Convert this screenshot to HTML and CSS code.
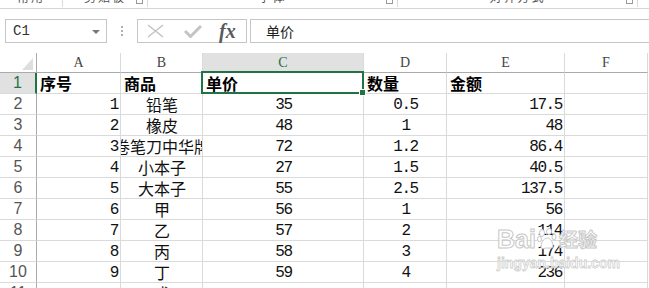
FILE: index.html
```html
<!DOCTYPE html>
<html lang="zh-CN">
<head>
    <meta charset="UTF-8">
    <title>工作表</title>
    <link rel="stylesheet" href="styles.css">
</head>
<body>

<!-- Ribbon, only the bottom edge of the group labels is visible -->
<div class="ribbon">
    <div class="group g1"><span class="group-label">常用</span></div>
    <div class="group g2"><span class="group-label">剪贴板</span><span class="launcher"></span></div>
    <div class="group g3"><span class="group-label">字体</span><span class="launcher"></span></div>
    <div class="group g4"><span class="group-label">对齐方式</span><span class="launcher"></span></div>
</div>

<!-- Name box and formula bar -->
<div class="formula-bar">
    <div class="name-box">
        <span>C1</span>
        <span class="caret"></span>
    </div>
    <div class="grip">
        <svg width="3" height="11" viewBox="0 0 3 11">
            <rect x="0" y="0" width="2" height="2" fill="#b0b0b0"/>
            <rect x="0" y="4" width="2" height="2" fill="#b0b0b0"/>
            <rect x="0" y="8" width="2" height="2" fill="#b0b0b0"/>
        </svg>
    </div>
    <div class="fx-box">
        <svg class="btn-cancel" width="17" height="14" viewBox="0 0 17 14">
            <path d="M1 1 L16 13 M16 1 L1 13" stroke="#c4c4c4" stroke-width="1.6" fill="none"/>
        </svg>
        <svg class="btn-ok" width="18" height="13" viewBox="0 0 18 13">
            <path d="M1 6 L6.5 11.5 L17 1" stroke="#c4c4c4" stroke-width="3" fill="none"/>
        </svg>
        <span class="fx">fx</span>
    </div>
    <div class="formula-input">单价</div>
</div>

<!-- Worksheet grid -->
<div class="sheet">
    <div class="corner">
        <svg width="12" height="13" viewBox="0 0 12 13"><polygon points="11,0 11,12 0,12" fill="#dedede"/></svg>
    </div>
    <div class="col">A</div>
    <div class="col">B</div>
    <div class="col on">C</div>
    <div class="col">D</div>
    <div class="col">E</div>
    <div class="col">F</div>

    <div class="rh on">1</div>
    <div class="cell b">序号</div>
    <div class="cell b">商品</div>
    <div class="cell b sel">单价</div>
    <div class="cell b">数量</div>
    <div class="cell b">金额</div>
    <div class="cell"></div>

    <div class="rh">2</div>
    <div class="cell r">1</div>
    <div class="cell m zh">铅笔</div>
    <div class="cell m">35</div>
    <div class="cell m">0.5</div>
    <div class="cell r">17.5</div>
    <div class="cell"></div>

    <div class="rh">3</div>
    <div class="cell r">2</div>
    <div class="cell m zh">橡皮</div>
    <div class="cell m">48</div>
    <div class="cell m">1</div>
    <div class="cell r">48</div>
    <div class="cell"></div>

    <div class="rh">4</div>
    <div class="cell r">3</div>
    <div class="cell m zh">卷笔刀中华牌</div>
    <div class="cell m">72</div>
    <div class="cell m">1.2</div>
    <div class="cell r">86.4</div>
    <div class="cell"></div>

    <div class="rh">5</div>
    <div class="cell r">4</div>
    <div class="cell m zh">小本子</div>
    <div class="cell m">27</div>
    <div class="cell m">1.5</div>
    <div class="cell r">40.5</div>
    <div class="cell"></div>

    <div class="rh">6</div>
    <div class="cell r">5</div>
    <div class="cell m zh">大本子</div>
    <div class="cell m">55</div>
    <div class="cell m">2.5</div>
    <div class="cell r">137.5</div>
    <div class="cell"></div>

    <div class="rh">7</div>
    <div class="cell r">6</div>
    <div class="cell m zh">甲</div>
    <div class="cell m">56</div>
    <div class="cell m">1</div>
    <div class="cell r">56</div>
    <div class="cell"></div>

    <div class="rh">8</div>
    <div class="cell r">7</div>
    <div class="cell m zh">乙</div>
    <div class="cell m">57</div>
    <div class="cell m">2</div>
    <div class="cell r">114</div>
    <div class="cell"></div>

    <div class="rh">9</div>
    <div class="cell r">8</div>
    <div class="cell m zh">丙</div>
    <div class="cell m">58</div>
    <div class="cell m">3</div>
    <div class="cell r">174</div>
    <div class="cell"></div>

    <div class="rh">10</div>
    <div class="cell r">9</div>
    <div class="cell m zh">丁</div>
    <div class="cell m">59</div>
    <div class="cell m">4</div>
    <div class="cell r">236</div>
    <div class="cell"></div>

    <div class="rh">11</div>
    <div class="cell r"></div>
    <div class="cell m zh">戊</div>
    <div class="cell m"></div>
    <div class="cell m"></div>
    <div class="cell r"></div>
    <div class="cell"></div>
</div>

<!-- Site watermark over the sheet -->
<div class="watermark">
    <div class="wm-top">
        <span class="wm-bai">Bai</span>
        <svg class="wm-paw" width="20" height="22" viewBox="0 0 20 22">
            <ellipse cx="5" cy="5" rx="2.5" ry="3.5" fill="#fff" stroke="#c8c8c8"/>
            <ellipse cx="12" cy="3.5" rx="2.5" ry="3" fill="#fff" stroke="#c8c8c8"/>
            <ellipse cx="2.5" cy="11" rx="2" ry="2.8" fill="#fff" stroke="#c8c8c8"/>
            <ellipse cx="17" cy="9" rx="2" ry="2.8" fill="#fff" stroke="#c8c8c8"/>
            <path d="M4 19 C4 13 8 10 10.5 10 C13 10 16 14 16 18 C16 21 12 20 10 20 C8 20 4 22 4 19 Z" fill="#fff" stroke="#c8c8c8"/>
        </svg>
        <span class="wm-jy">经验</span>
    </div>
    <div class="wm-url">jingyan.baidu.com</div>
</div>

</body>
</html>
```

FILE: styles.css
```css
/* Basic reset */
*, *::before, *::after {
    box-sizing: border-box;
}

body {
    position: relative;
    margin: 0;
    width: 649px;
    height: 288px;
    overflow: hidden;
    background: #fff;
    font-family: "Noto Sans CJK SC", sans-serif;
}

/* Ribbon strip at the very top */
.ribbon {
    display: flex;
    height: 9px;
    border-bottom: 1px solid #d5d5d5;
    overflow: hidden;
}

.group {
    position: relative;
    display: flex;
    justify-content: center;
    height: 7px;
    border-right: 1px solid #dadada;
}

.g1 { width: 63px; }
.g2 { width: 85px; }
.g3 { width: 250px; }
.g4 { width: 240px; }

.group-label {
    margin-top: -9px;
    font-size: 12px;
    line-height: 12px;
    color: #555;
    letter-spacing: 2px;
}

.launcher {
    position: absolute;
    right: 4px;
    top: -2px;
    width: 7px;
    height: 6px;
    border: 1px solid #999;
    border-top: none;
}

/* Formula bar */
.formula-bar {
    display: flex;
    height: 24px;
    margin-top: 10px;
}

.name-box {
    display: flex;
    align-items: center;
    justify-content: space-between;
    width: 102px;
    margin-left: 5px;
    padding: 0 6px 0 7px;
    border: 1px solid #c6c6c6;
    font-family: "Liberation Mono", monospace;
    font-size: 14px;
    color: #333;
}

.caret {
    width: 0;
    height: 0;
    margin-top: 1px;
    border-left: 4px solid transparent;
    border-right: 4px solid transparent;
    border-top: 4px solid #777;
}

.grip {
    display: flex;
    align-items: center;
    justify-content: center;
    width: 30px;
}

.fx-box {
    display: flex;
    align-items: center;
    width: 110px;
    border: 1px solid #c6c6c6;
}

.btn-cancel { margin-left: 9px; }
.btn-ok { margin-left: 20px; }

.fx {
    margin-left: 17px;
    font-family: "Liberation Serif", serif;
    font-style: italic;
    font-weight: bold;
    font-size: 20px;
    line-height: 20px;
    color: #5a5a5a;
}

.formula-input {
    flex: 1;
    display: flex;
    align-items: center;
    margin-left: 3px;
    padding-left: 15px;
    border: 1px solid #c6c6c6;
    border-right: none;
    font-size: 14px;
    color: #222;
}

/* Worksheet */
.sheet {
    display: grid;
    grid-template-columns: 37px 84px 82px 161px 83px 118px 83px;
    grid-template-rows: 20px;
    grid-auto-rows: 21px;
    height: 235px;
    margin-top: 10px;
    overflow: hidden;
}

.corner {
    display: flex;
    align-items: flex-end;
    justify-content: flex-end;
    padding: 0 2px 1px 0;
    border-right: 1px solid #ababab;
    border-bottom: 1px solid #ababab;
}

.col {
    display: flex;
    align-items: center;
    justify-content: center;
    border-right: 1px solid #dadada;
    border-bottom: 1px solid #ababab;
    font-family: "Liberation Serif", serif;
    font-size: 14px;
    color: #444;
}

.col.on {
    background: #e1e1e1;
    color: #217346;
}

.rh {
    display: flex;
    align-items: center;
    justify-content: center;
    border-right: 1px solid #ababab;
    border-bottom: 1px solid #dadada;
    font-family: "Liberation Sans", sans-serif;
    font-size: 16px;
    color: #555;
}

.rh.on {
    background: #e1e1e1;
    border-right: 2px solid #217346;
    color: #217346;
}

.cell {
    display: flex;
    align-items: center;
    padding: 1px 2px 0 3px;
    border-right: 1px solid #dadada;
    border-bottom: 1px solid #dadada;
    overflow: hidden;
    white-space: nowrap;
    font-family: "Liberation Mono", "Noto Sans CJK SC", monospace;
    font-size: 16px;
    letter-spacing: -1.4px;
    color: #111;
}

.cell.r { justify-content: flex-end; }
.cell.m { justify-content: center; }

.cell.zh {
    padding-top: 0;
    font-family: "Noto Sans CJK SC", sans-serif;
    font-size: 16px;
    letter-spacing: 0;
}

.cell.b {
    padding-top: 0;
    font-family: "Noto Sans CJK SC", sans-serif;
    font-size: 16px;
    font-weight: bold;
    letter-spacing: 0;
    color: #000;
}

/* Active cell outline with its fill handle */
.cell.sel {
    position: relative;
    z-index: 1;
    overflow: visible;
}

.cell.sel::after {
    content: "";
    position: absolute;
    top: -2px;
    left: -2px;
    right: -1px;
    bottom: -1px;
    border: 2px solid #217346;
}

.cell.sel::before {
    content: "";
    position: absolute;
    right: -3px;
    bottom: -3px;
    width: 7px;
    height: 7px;
    background: #217346;
    border: 1px solid #fff;
    z-index: 2;
}

/* Watermark */
.watermark {
    position: absolute;
    left: 497px;
    top: 226px;
    width: 118px;
}

.wm-top {
    display: flex;
    align-items: center;
}

.wm-bai {
    font-family: "Liberation Sans", sans-serif;
    font-weight: bold;
    font-size: 25px;
    line-height: 26px;
    color: rgba(255, 255, 255, 0.8);
    -webkit-text-stroke: 1px #c8c8c8;
}

.wm-paw {
    margin-left: 1px;
}

.wm-jy {
    margin-left: 2px;
    font-weight: bold;
    font-size: 19px;
    line-height: 26px;
    color: rgba(255, 255, 255, 0.8);
    -webkit-text-stroke: 1px #c8c8c8;
}

.wm-url {
    margin-top: 3px;
    font-family: "Liberation Sans", sans-serif;
    font-weight: bold;
    font-size: 14px;
    color: rgba(255, 255, 255, 0.8);
    -webkit-text-stroke: 0.8px #cfcfcf;
}
```
